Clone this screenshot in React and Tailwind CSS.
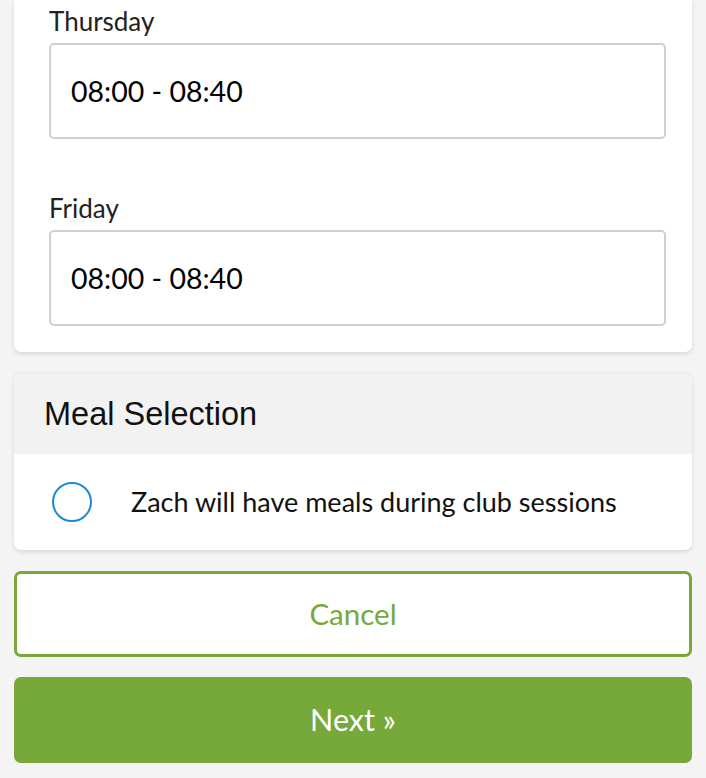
import React, { useState } from "react";

const TimeField = ({ label, value }) => (
  <div className="flex flex-col">
    <label className="text-[26px] leading-[30px] text-[#222]">{label}</label>
    <div className="mt-[7px] h-[96px] flex items-center px-[20px] border-2 border-[#cfcfcf] rounded-[5px] bg-white text-[28.5px] text-black">
      {value}
    </div>
  </div>
);

const App = () => {
  const [meals, setMeals] = useState(false);

  return (
    <div className="min-h-[778px] bg-[#f4f4f4] px-[14px] font-['Lato',sans-serif]">
      {/* Session times */}
      <div className="bg-white rounded-b-[7px] shadow-[0_2px_4px_rgba(0,0,0,0.12)] pl-[35px] pr-[26px] pt-[6px] pb-[26px]">
        <TimeField label="Thursday" value="08:00 - 08:40" />
        <div className="h-[54px]" />
        <TimeField label="Friday" value="08:00 - 08:40" />
      </div>

      {/* Meal selection */}
      <div className="mt-[20px] bg-white rounded-[7px] overflow-hidden shadow-[0_2px_4px_rgba(0,0,0,0.12)] border-t-2 border-[#ebebeb]">
        <div className="h-[80px] flex items-center px-[30px] bg-[#f2f2f2] text-[32.5px] text-[#111] font-['Liberation_Sans',sans-serif]">
          Meal Selection
        </div>
        <button
          onClick={() => setMeals(!meals)}
          className="w-full h-[96px] flex items-center px-[38px] text-left"
        >
          <span className="w-[40px] h-[40px] rounded-full border-2 border-[#1b8ad8] flex items-center justify-center shrink-0">
            {meals && <span className="w-[22px] h-[22px] rounded-full bg-[#1b8ad8]" />}
          </span>
          <span className="ml-[39px] text-[27px] text-[#111]">Zach will have meals during club sessions</span>
        </button>
      </div>

      {/* Actions */}
      <button className="mt-[21px] w-full h-[86px] rounded-[7px] border-[3px] border-[#76a83a] bg-white text-[#76a83a] text-[29.5px]">
        Cancel
      </button>
      <button className="mt-[20px] w-full h-[86px] rounded-[7px] bg-[#77a83a] text-white text-[30.5px]">
        Next »
      </button>
    </div>
  );
};

export default App;
